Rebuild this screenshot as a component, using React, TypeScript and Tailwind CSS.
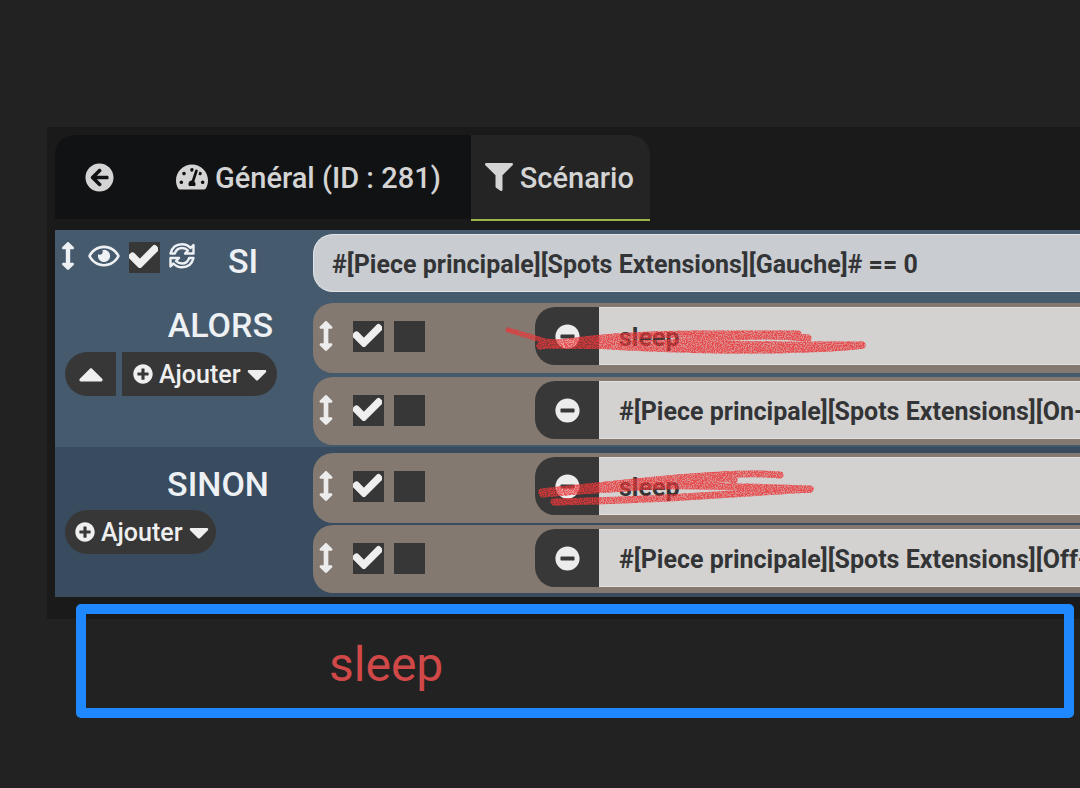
import React from "react";
import {
  FaArrowCircleLeft,
  FaTachometerAlt,
  FaFilter,
  FaArrowsAltV,
  FaRegEye,
  FaCheck,
  FaCaretDown,
  FaCaretUp,
  FaPlusCircle,
  FaMinusCircle,
} from "react-icons/fa";

function RefreshIcon() {
  return (
    <svg
      viewBox="0 0 28 28"
      className="size-7 shrink-0"
      fill="none"
      stroke="currentColor"
      strokeWidth="2.4"
      strokeLinejoin="round"
      strokeLinecap="round"
      aria-hidden="true"
    >
      <path d="M2.500 11.500C4 5.500 8.500 2.200 14 2.200c3.600 0 6.400 1.400 8.600 3.800L25.500 3v8.500h-8.500l3-3C18.400 6.800 16.400 6 14 6c-3.600 0-6 2-7.200 5.500z" />
      <path d="M25.500 16C24 22 19.500 25.300 14 25.300c-3.600 0-6.400-1.400-8.600-3.800L2.500 24.500V16H11l-3 3c1.600 1.700 3.600 2.500 6 2.500 3.600 0 6-2 7.200-5.500z" />
    </svg>
  );
}

function Tick({ label, defaultChecked = false }: { label: string; defaultChecked?: boolean }) {
  return (
    <label className="relative block size-[31px] shrink-0">
      <input
        type="checkbox"
        aria-label={label}
        defaultChecked={defaultChecked}
        className="peer block size-full appearance-none bg-[#373737]"
      />
      <FaCheck
        className="pointer-events-none absolute inset-x-0 top-0 hidden size-[29px] text-[#efefef] peer-checked:block"
        stroke="currentColor"
        strokeWidth={28}
      />
    </label>
  );
}

function Scribble({ paths, className }: { paths: string[]; className: string }) {
  return (
    <svg
      viewBox="0 0 400 60"
      className={"pointer-events-none absolute h-[60px] w-[400px] " + className}
      fill="none"
      stroke="#e8393b"
      strokeLinecap="round"
      strokeLinejoin="round"
      filter="url(#chalk)"
      aria-hidden="true"
    >
      {paths.map((d, i) => (
        <path key={d} d={d} strokeWidth={i === 0 ? 5 : 7} />
      ))}
    </svg>
  );
}

function ActionRow({
  value,
  roomy = false,
  children,
}: {
  value: string;
  roomy?: boolean;
  children?: React.ReactNode;
}) {
  return (
    <div
      className={
        "relative flex items-start rounded-l-[20px] bg-[#837970] pt-1 " + (roomy ? "pb-2" : "pb-[6px]")
      }
    >
      <div className="flex h-[58px] w-[222px] shrink-0 items-center pl-1">
        <FaArrowsAltV className="h-[30px] w-[18px] shrink-0 text-[#ececec]" />
        <div className="ml-[18px] flex gap-[10px]">
          <Tick label="Activer l'action" defaultChecked />
          <Tick label="Exécuter en parallèle" />
        </div>
      </div>
      <button
        aria-label="Supprimer l'action"
        className="flex h-[58px] w-16 shrink-0 items-center justify-center rounded-l-[20px] bg-[#383838] text-[#ececec]"
      >
        <FaMinusCircle className="size-[25px]" />
      </button>
      <input
        aria-label="Action"
        defaultValue={value}
        className="h-[58px] min-w-0 flex-1 border-y border-[#e2e1e0] bg-[#d3d2d0] pl-5 pt-[2px] text-[25px] font-bold text-[#333436] outline-none"
      />
      {children}
    </div>
  );
}

function AddButton({ className }: { className: string }) {
  return (
    <button
      className={"flex h-11 items-center bg-[#373737] text-[25px] font-medium text-[#efefef] " + className}
    >
      <FaPlusCircle className="mr-[6px] size-5" />
      <span className="pt-[2px]">Ajouter</span>
      <FaCaretDown className="ml-[5px] h-8 w-[22px]" />
    </button>
  );
}

export default function App() {
  return (
    <div className="min-h-screen overflow-hidden bg-[#222222] pt-[127px] font-[Roboto,sans-serif]">
      <svg className="absolute size-0" aria-hidden="true">
        <filter id="chalk">
          <feTurbulence type="fractalNoise" baseFrequency="0.9" numOctaves="2" seed="4" result="noise" />
          <feColorMatrix in="noise" type="matrix" values="0 0 0 0 0  0 0 0 0 0  0 0 0 0 0  0 0 0 -5 3.1" result="grain" />
          <feComposite in="SourceGraphic" in2="grain" operator="in" result="speckled" />
          <feComponentTransfer in="SourceGraphic" result="wash">
            <feFuncA type="linear" slope="0.5" />
          </feComponentTransfer>
          <feMerge result="stroke">
            <feMergeNode in="wash" />
            <feMergeNode in="speckled" />
          </feMerge>
          <feComponentTransfer in="stroke">
            <feFuncA type="linear" slope="0.88" />
          </feComponentTransfer>
        </filter>
      </svg>

      <main className="ml-[47px] bg-[#1a1a1a] pb-[22px] pl-2 pt-2">
        <nav className="mb-[9px] flex h-[86px] text-[29px] font-medium text-[#d4d4d4]">
          <div className="mb-[2px] flex rounded-tl-[20px] bg-[#111214]">
            <a href="#retour" aria-label="Retour" className="flex items-center px-[30px]">
              <FaArrowCircleLeft className="size-[29px]" />
            </a>
            <a href="#general" className="flex items-center gap-[7px] pl-8 pr-[30px]">
              <FaTachometerAlt className="size-8" />
              <span className="pt-[3px]">Général (ID : 281)</span>
            </a>
          </div>
          <a
            href="#scenario"
            className="flex items-center gap-[7px] rounded-tr-[20px] border-b-2 border-[#9bb547] bg-[#242424] pl-[14px] pr-4"
          >
            <FaFilter className="size-7" />
            <span className="pt-[3px]">Scénario</span>
          </a>
        </nav>

        <section className="bg-[#465a6e] text-[#eef1f4]">
          <div className="flex pt-1">
            <div className="flex w-[258px] shrink-0 items-start pl-1 pt-2">
              <FaArrowsAltV className="h-[28px] w-[18px] shrink-0" />
              <FaRegEye className="ml-[9px] h-7 w-[36px] shrink-0" />
              <div className="ml-[7px] mr-2">
                <Tick label="Activer le bloc" defaultChecked />
              </div>
              <RefreshIcon />
              <span className="ml-8 pt-[2px] text-[34px] font-medium leading-[34px]">SI</span>
            </div>
            <input
              aria-label="Condition"
              defaultValue="#[Piece principale][Spots Extensions][Gauche]# == 0"
              className="h-[58px] min-w-0 flex-1 rounded-l-[20px] border-y border-l border-[#e0e4e8] bg-[#c9cdd1] pl-[18px] pt-[2px] text-[25px] font-bold text-[#333436] outline-none"
            />
          </div>

          <div className="flex pb-[2px] pt-[11px]">
            <div className="w-[258px] shrink-0 pl-[10px] pr-10 pt-[5px]">
              <h2 className="text-right text-[34px] font-medium leading-[34px]">ALORS</h2>
              <div className="mt-[10px] flex gap-[6px]">
                <button
                  aria-label="Replier"
                  className="flex h-11 w-[51px] shrink-0 items-center justify-center rounded-l-full bg-[#373737] text-[#efefef]"
                >
                  <FaCaretUp className="h-10 w-[26px]" />
                </button>
                <AddButton className="shrink-0 rounded-r-full pl-[11px] pr-[9px]" />
              </div>
            </div>
            <div className="flex min-w-0 flex-1 flex-col gap-1">
              <ActionRow value="sleep" roomy>
                <Scribble
                  className="left-[187px] top-[6px]"
                  paths={[
                    "M8 21 L45 32 L100 37",
                    "M40 37 Q110 25 200 25 T298 25",
                    "M42 36 Q140 38 200 31 T308 29",
                    "M50 34 Q160 34 210 35 T362 36",
                    "M80 35 Q180 42 260 41 T362 36",
                  ]}
                />
              </ActionRow>
              <ActionRow value="#[Piece principale][Spots Extensions][On-Off]#" />
            </div>
          </div>

          <div className="flex bg-[#394c5f] pb-1 pt-[6px]">
            <div className="w-[258px] shrink-0 pl-[10px] pr-[44px] pt-[14px]">
              <h2 className="text-right text-[34px] font-medium leading-[34px]">SINON</h2>
              <div className="mt-[9px] flex">
                <AddButton className="rounded-full pl-[10px] pr-[6px]" />
              </div>
            </div>
            <div className="flex min-w-0 flex-1 flex-col gap-[2px]">
              <ActionRow value="sleep" roomy>
                <Scribble
                  className="left-[187px] top-[6px]"
                  paths={[
                    "M42 36 L100 31",
                    "M42 33 Q130 23 190 18 T280 16",
                    "M44 34 Q150 28 190 23 T234 21",
                    "M60 31 Q150 26 200 27 T310 30",
                    "M54 43 Q140 41 200 37 T310 30",
                  ]}
                />
              </ActionRow>
              <ActionRow value="#[Piece principale][Spots Extensions][Off-On]#" />
            </div>
          </div>
        </section>
      </main>

      <div className="relative ml-[76px] mr-[6px] mt-[-15px] flex h-[114px] items-center rounded-[5px] border-[10px] border-[#1e88fc] pl-[243px] pt-2">
        <span className="text-[48px] leading-none text-[#d04848]">sleep</span>
      </div>
    </div>
  );
}
